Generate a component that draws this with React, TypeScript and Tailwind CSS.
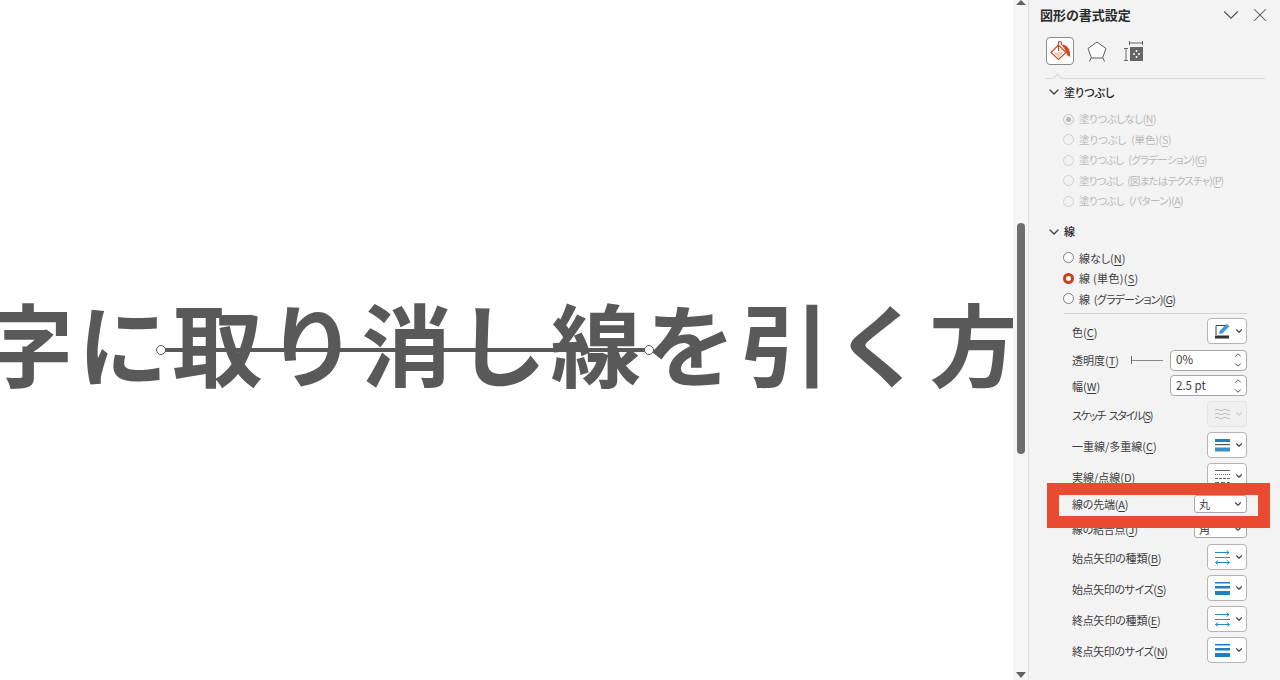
import React from 'react';
import { ChevronDown, ChevronUp, X } from 'lucide-react';

function Label({ text, k, className }: { text: string; k: string; className?: string }) {
  return (
    <span className={className}>
      {text}(<span className="underline underline-offset-2">{k}</span>)
    </span>
  );
}

function Radio({ text, k, on, off, className }: { text: string; k: string; on?: boolean; off?: boolean; className?: string }) {
  return (
    <div className={`flex items-center h-[20.5px] pl-[34px] ${off ? 'text-[#b9b9b9]' : 'text-[#3c3c3c]'}`}>
      {on && off ? (
        <span className="w-[11px] h-[11px] rounded-full border border-[#c4c4c4] mr-[5px] flex items-center justify-center">
          <span className="w-[5px] h-[5px] rounded-full bg-[#b5b5b5]"></span>
        </span>
      ) : on ? (
        <span className="w-[11px] h-[11px] rounded-full border-[3px] border-[#c9401c] bg-white mr-[5px]"></span>
      ) : (
        <span className={`w-[11px] h-[11px] rounded-full border mr-[5px] ${off ? 'border-[#d0d0d0]' : 'border-[#7d7d7d] bg-white'}`}></span>
      )}
      <Label text={text} k={k} className={className} />
    </div>
  );
}

function Section({ title, className }: { title: string; className?: string }) {
  return (
    <div className={`flex items-center h-[16px] pl-[17px] text-[#222] font-medium ${className ?? ''}`}>
      <ChevronDown size={16} strokeWidth={2} className="mr-[2px] text-[#444]" />
      {title}
    </div>
  );
}

function Caret({ muted }: { muted?: boolean }) {
  return <ChevronDown size={10} strokeWidth={2.6} className={muted ? 'text-[#cfcfcf]' : 'text-[#444]'} />;
}

function IconButton({ children, muted }: { children: React.ReactNode; muted?: boolean }) {
  return (
    <div className={`w-[40px] h-[26px] rounded-[4px] border flex items-center gap-[4px] pl-[7px] ${muted ? 'border-[#e4e4e4] bg-[#f0f0f0]' : 'border-[#b4b4b4] bg-white'}`}>
      {children}
      <Caret muted={muted} />
    </div>
  );
}

function Spin({ value }: { value: string }) {
  return (
    <div className="w-[77px] h-[21px] rounded-[4px] border border-[#a8a8a8] bg-white flex items-center justify-between pl-[5px] pr-[3px] text-[#3c3c3c]">
      <span className="text-[11.500px]">{value}</span>
      <span className="flex flex-col">
        <ChevronUp size={10} strokeWidth={2.2} className="text-[#444]" />
        <ChevronDown size={10} strokeWidth={2.2} className="text-[#444]" />
      </span>
    </div>
  );
}

function Select({ value }: { value: string }) {
  return (
    <div className="w-[53px] h-[18px] rounded-[3px] border border-[#a8a8a8] bg-white flex items-center justify-between pl-[4px] pr-[3px] text-[#3c3c3c]">
      <span>{value}</span>
      <Caret />
    </div>
  );
}

function LinesIcon() {
  return (
    <svg width="15" height="15" viewBox="0 0 15 15">
      <rect x="0" y="1" width="15" height="1.500" fill="#1f7fc0" />
      <rect x="0" y="5" width="15" height="2.500" fill="#1f7fc0" />
      <rect x="0" y="10" width="15" height="4" fill="#1f7fc0" />
    </svg>
  );
}

function CompoundIcon() {
  return (
    <svg width="15" height="15" viewBox="0 0 15 15">
      <rect x="0" y="1" width="15" height="3" fill="#1f7fc0" />
      <rect x="0" y="6" width="15" height="1.200" fill="#555" />
      <rect x="0" y="9.500" width="15" height="4" fill="#3a8fca" />
    </svg>
  );
}

function DashIcon() {
  return (
    <svg width="15" height="15" viewBox="0 0 15 15" fill="none" stroke="#666">
      <path d="M0 1.500H15" />
      <path d="M0 5.500H15" strokeDasharray="1 1" />
      <path d="M0 9.500H15" strokeDasharray="3 1" />
      <path d="M0 13.500H15" strokeDasharray="4 2" />
    </svg>
  );
}

function ArrowsIcon() {
  return (
    <svg width="15" height="15" viewBox="0 0 15 15" fill="none" stroke="#2b86c5" strokeWidth="1">
      <path d="M0 2.500H14M11.500 0.500L14 2.500L11.500 4.500" />
      <path d="M0 7.500H15" stroke="#777" />
      <path d="M3 10.500L0.500 12.500L3 14.500M0.500 12.500H14.500M12 10.500L14.500 12.500L12 14.500" />
    </svg>
  );
}

function PenIcon() {
  return (
    <svg width="15" height="16" viewBox="0 0 15 16" fill="none">
      <path d="M1 12V2.500H10" stroke="#444" strokeWidth="1" />
      <path d="M4.500 10.500L5 8L11.500 1.200L14 3.300L7.500 10Z" fill="#3a9ad9" stroke="#2477b3" strokeWidth="0.500" />
      <rect x="0" y="12.500" width="14" height="3" fill="#333" />
    </svg>
  );
}

function SketchIcon() {
  return (
    <svg width="15" height="13" viewBox="0 0 15 13" fill="none" stroke="#bdbdbd" strokeWidth="1">
      <path d="M0 2q2-1.500 4 0t4 0t4 0t3 0" />
      <path d="M0 6q2-1.500 4 0t4 0t4 0t3 0" />
      <path d="M0 10q2-1.500 4 0t4 0t4 0t3 0" />
    </svg>
  );
}

function FillIcon() {
  return (
    <svg width="24" height="24" viewBox="0 0 24 24" fill="none">
      <path d="M10.500 6L3 13.500L10.500 20.500L18 13.500Z" stroke="#cf4a24" strokeWidth="1.200" fill="#fff" />
      <path d="M5.500 13.500L15.500 13.500L10.500 18.500Z" fill="#f3c8b8" />
      <path d="M10.500 12V3.500a1.600 1.600 0 0 1 3 0V6" stroke="#cf4a24" strokeWidth="1.100" />
      <path d="M13 5.500c5 0 8.500 3 9 8.500v4l-3-2-1-3c-.8-2.500-2.500-5-5-7.500Z" fill="#cf4a24" />
    </svg>
  );
}

function ShapeIcon() {
  return (
    <svg width="22" height="24" viewBox="0 0 22 24" fill="none" stroke="#5a5a5a" strokeWidth="1">
      <path d="M11 3L20 9.500L16.500 19H5.500L2 9.500Z" fill="#fff" />
      <path d="M5 19L3.500 22.500M17 19L18.500 22.500" />
    </svg>
  );
}

function LayoutIcon() {
  return (
    <svg width="22" height="24" viewBox="0 0 22 24" fill="none">
      <path d="M6.500 2V6M19.500 2V6M6.500 4H19.500" stroke="#666" />
      <path d="M1 9.500H5M1 21.500H5M3 9.500V21.500" stroke="#666" />
      <rect x="7" y="8" width="13" height="14" fill="#666" />
      <path d="M13.500 11V13M13.500 17V19M10 15H12M15 15H17" stroke="#fff" strokeWidth="1.400" />
    </svg>
  );
}

const lower = 'pt-[2px]';

const rows: { key: string; mt: string; h: string; label: React.ReactNode; control: React.ReactNode }[] = [
  { key: 'color', mt: 'mt-0', h: 'h-[26px]', label: <Label text="色" k="C" className={lower} />, control: <IconButton><PenIcon /></IconButton> },
  {
    key: 'alpha',
    mt: 'mt-[6px]',
    h: 'h-[20px]',
    label: <Label text="透明度" k="T" />,
    control: (
      <div className="flex items-center gap-[7px]">
        <span className="flex items-center w-[32px]">
          <span className="w-px h-[8px] bg-[#666]"></span>
          <span className="flex-1 h-px bg-[#888]"></span>
        </span>
        <Spin value="0%" />
      </div>
    ),
  },
  { key: 'width', mt: 'mt-[5px]', h: 'h-[21px]', label: <Label text="幅" k="W" className={lower} />, control: <Spin value="2.5 pt" /> },
  { key: 'sketch', mt: 'mt-[5px]', h: 'h-[26px]', label: <Label text="スケッチ スタイル" k="S" className={`${lower} tracking-[-1.500px] [word-spacing:3px]`} />, control: <IconButton muted><SketchIcon /></IconButton> },
  { key: 'compound', mt: 'mt-[5px]', h: 'h-[26px]', label: <Label text="一重線/多重線" k="C" className={lower} />, control: <IconButton><CompoundIcon /></IconButton> },
  { key: 'dash', mt: 'mt-[5px]', h: 'h-[26px]', label: <Label text="実線/点線" k="D" className={lower} />, control: <IconButton><DashIcon /></IconButton> },
  { key: 'cap', mt: 'mt-[6px]', h: 'h-[18px]', label: <Label text="線の先端" k="A" className="tracking-[-0.200px]" />, control: <Select value="丸" /> },
  { key: 'join', mt: 'mt-[7px]', h: 'h-[18px]', label: <Label text="線の結合点" k="J" className="tracking-[-0.300px]" />, control: <Select value="角" /> },
  { key: 'beginType', mt: 'mt-[6px]', h: 'h-[26px]', label: <Label text="始点矢印の種類" k="B" className={`${lower} tracking-[-0.200px]`} />, control: <IconButton><ArrowsIcon /></IconButton> },
  { key: 'beginSize', mt: 'mt-[5px]', h: 'h-[26px]', label: <Label text="始点矢印のサイズ" k="S" className={`${lower} tracking-[-0.400px]`} />, control: <IconButton><LinesIcon /></IconButton> },
  { key: 'endType', mt: 'mt-[5px]', h: 'h-[26px]', label: <Label text="終点矢印の種類" k="E" className={`${lower} tracking-[-0.200px]`} />, control: <IconButton><ArrowsIcon /></IconButton> },
  { key: 'endSize', mt: 'mt-[5px]', h: 'h-[26px]', label: <Label text="終点矢印のサイズ" k="N" className={`${lower} tracking-[-0.400px]`} />, control: <IconButton><LinesIcon /></IconButton> },
];

export default function App() {
  return (
    <div className="w-[1280px] h-[680px] flex overflow-hidden bg-white font-['Noto_Sans_CJK_JP','Noto_Sans',sans-serif] text-[11px] [font-feature-settings:'palt']">
      {/* slide */}
      <div className="relative w-[1013px] h-full overflow-hidden flex items-center justify-center">
        <div className="shrink-0 whitespace-nowrap text-[90px] leading-none font-bold text-[#595959] tracking-[4.600px] mr-[6px] mt-[2px] [font-feature-settings:normal]">
          字に取り消し線を引く方
        </div>
        <div className="absolute left-[161px] top-[348px] w-[488px] h-[4px] bg-[#595959]"></div>
        <div className="absolute left-[156px] top-[345px] w-[10px] h-[10px] rounded-full border-[1.500px] border-[#595959] bg-white"></div>
        <div className="absolute left-[644px] top-[345px] w-[10px] h-[10px] rounded-full border-[1.500px] border-[#595959] bg-white"></div>
      </div>

      {/* scrollbar */}
      <div className="w-[15px] h-full bg-[#f5f5f5] flex flex-col items-center">
        <span className="w-0 h-0 border-x-[5px] border-x-transparent border-b-[5px] border-b-[#606060]"></span>
        <span className="w-[8px] h-[231px] mt-[218px] rounded-full bg-[#6e6e6e]"></span>
        <span className="mt-auto w-0 h-0 border-x-[5px] border-x-transparent border-t-[6px] border-t-[#606060] mb-[2px]"></span>
      </div>

      {/* format pane */}
      <div className="relative w-[252px] h-full bg-[#f3f3f3] border-l border-[#e2e2e2]">
        <div className="flex items-center justify-between h-[30px] pl-[11px] pr-[9px]">
          <span className="text-[13px] font-bold text-[#2b2b2b]">図形の書式設定</span>
          <span className="flex items-center gap-[5px] text-[#555]">
            <ChevronDown size={26} strokeWidth={1} />
            <X size={22} strokeWidth={1.100} />
          </span>
        </div>

        <div className="flex items-center h-[28px] mt-[7px] pl-[17px]">
          <span className="w-[28px] h-[28px] rounded-[4px] border border-[#8a8a8a] bg-white flex items-center justify-center">
            <FillIcon />
          </span>
          <span className="ml-[12px]"><ShapeIcon /></span>
          <span className="ml-[15px]"><LayoutIcon /></span>
        </div>

        <div className="relative mt-[13px] ml-[16px] mr-[15px] h-px bg-[#d8d8d8]">
          <span className="absolute left-[9px] -top-[3px] w-[7px] h-[7px] rotate-45 bg-[#f3f3f3] border-l border-t border-[#d8d8d8]"></span>
        </div>

        <Section title="塗りつぶし" className="mt-[5px]" />
        <div className="mt-[9px] text-[10.500px]">
          <Radio text="塗りつぶしなし" k="N" on off className="tracking-[-0.500px]" />
          <Radio text="塗りつぶし (単色)" k="S" off className="tracking-[-0.200px] [word-spacing:3px]" />
          <Radio text="塗りつぶし (グラデーション)" k="G" off className="tracking-[-0.700px] [word-spacing:3px]" />
          <Radio text="塗りつぶし (図またはテクスチャ)" k="P" off className="tracking-[-0.850px] [word-spacing:3px]" />
          <Radio text="塗りつぶし (パターン)" k="A" off className="tracking-[-0.550px] [word-spacing:3px]" />
        </div>

        <Section title="線" className="mt-[12px]" />
        <div className="mt-[8px]">
          <Radio text="線なし" k="N" />
          <Radio text="線 (単色)" k="S" on className="tracking-[0.300px]" />
          <Radio text="線 (グラデーション)" k="G" className="tracking-[-0.800px] [word-spacing:3px]" />
        </div>

        <div className="ml-[35px] mr-[33px] mt-[4px] h-px bg-[#d4d4d4]"></div>

        <div className="mt-[4px] pl-[43px] pr-[33px] text-[#3c3c3c]">
          {rows.map((r) => (
            <div key={r.key} className={`flex items-center justify-between ${r.mt} ${r.h}`}>
              {r.label}
              {r.control}
            </div>
          ))}
        </div>

        {/* red callout */}
        <div className="absolute left-[18px] top-[483px] w-[223px] h-[45px] border-[12px] border-[#e84b2f]"></div>
      </div>
    </div>
  );
}
